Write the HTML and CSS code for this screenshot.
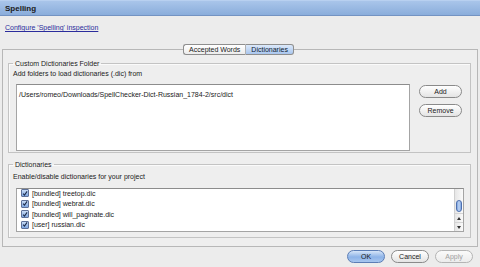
FILE: index.html
```html
<!DOCTYPE html>
<html lang="en">
<head>
    <meta charset="UTF-8">
    <meta name="viewport" content="width=device-width, initial-scale=1.0">
    <title>Spelling</title>
    <link rel="stylesheet" href="styles.css">
</head>
<body>
    <div class="titlebar">Spelling</div>
    <div class="link-row">
        <a href="#" class="config-link">Configure 'Spelling' inspection</a>
    </div>
    <div class="tabs">
        <div class="tab">Accepted Words</div>
        <div class="tab selected">Dictionaries</div>
    </div>
    <div class="pane">
        <fieldset class="group">
            <legend>Custom Dictionaries Folder</legend>
            <div class="hint">Add folders to load dictionaries (.dic) from</div>
            <div class="folder-row">
                <div class="folder-list">/Users/romeo/Downloads/SpellChecker-Dict-Russian_1784-2/src/dict</div>
                <div class="side-buttons">
                    <button class="btn">Add</button>
                    <button class="btn">Remove</button>
                </div>
            </div>
        </fieldset>
        <fieldset class="group dicts">
            <legend>Dictionaries</legend>
            <div class="hint">Enable/disable dictionaries for your project</div>
            <div class="dict-list">
                <div class="dict-items">
                    <div class="dict-item"><span class="check"><svg viewBox="0 0 8 8" width="8" height="8"><path d="M1.5 4.2 L3.3 6.2 L6.8 1.2" fill="none" stroke="#1c2a4a" stroke-width="1.4"/></svg></span>[bundled] treetop.dic</div>
                    <div class="dict-item"><span class="check"><svg viewBox="0 0 8 8" width="8" height="8"><path d="M1.5 4.2 L3.3 6.2 L6.8 1.2" fill="none" stroke="#1c2a4a" stroke-width="1.4"/></svg></span>[bundled] webrat.dic</div>
                    <div class="dict-item"><span class="check"><svg viewBox="0 0 8 8" width="8" height="8"><path d="M1.5 4.2 L3.3 6.2 L6.8 1.2" fill="none" stroke="#1c2a4a" stroke-width="1.4"/></svg></span>[bundled] will_paginate.dic</div>
                    <div class="dict-item"><span class="check"><svg viewBox="0 0 8 8" width="8" height="8"><path d="M1.5 4.2 L3.3 6.2 L6.8 1.2" fill="none" stroke="#1c2a4a" stroke-width="1.4"/></svg></span>[user] russian.dic</div>
                </div>
                <div class="scrollbar">
                    <div class="track"><div class="thumb"></div></div>
                    <div class="arrow up"></div>
                    <div class="arrow down"></div>
                </div>
            </div>
        </fieldset>
    </div>
    <div class="footer">
        <button class="btn default">OK</button>
        <button class="btn">Cancel</button>
        <button class="btn" disabled>Apply</button>
    </div>
</body>
</html>
```

FILE: styles.css
```css
body {
    margin: 0;
    width: 480px;
    height: 267px;
    overflow: hidden;
    background-color: #ececec;
    font-family: "Liberation Sans", Arial, sans-serif;
    font-size: 7px;
    color: #1a1a1a;
}
.titlebar {
    height: 16px;
    line-height: 16px;
    padding-left: 5px;
    font-size: 8px;
    font-weight: bold;
    background: linear-gradient(#a9c5ea, #8aaddb);
    border-top: 1px solid #b8d0f0;
    border-bottom: 1px solid #7393c2;
    box-sizing: border-box;
}
.link-row {
    padding: 7px 5px 0;
    height: 11px;
    line-height: 9px;
}
.config-link {
    color: #2b2c9c;
    text-decoration: underline;
}
.tabs {
    display: flex;
    justify-content: center;
    margin-top: 10px;
    margin-bottom: -6px;
    position: relative;
    z-index: 1;
    padding-right: 3px;
}
.tab {
    height: 9px;
    line-height: 9px;
    padding: 0 5px;
    border: 1px solid #8e8e8e;
    background: linear-gradient(#ffffff, #ececec);
}
.tab:first-child {
    border-radius: 3px 0 0 3px;
    border-right: 1px solid #b0b0b0;
}
.tab:last-child {
    border-radius: 0 3px 3px 0;
    border-left: none;
}
.tab.selected {
    background: linear-gradient(#dce9fa, #a9c6ee);
    color: #0d1a33;
}
.pane {
    margin: 0 2px 0 2px;
    height: 198px;
    border: 1px solid #b7b7b7;
    padding: 9px 6px 0 5px;
    box-sizing: border-box;
    background-color: #eeeeee;
}
.group {
    margin: 0;
    padding: 0 4px 1px 4px;
    border: 1px solid #c3c3c3;
    box-shadow: inset 1px 1px 0 #fafafa;
}
.group legend {
    padding: 0 2px;
    margin-left: 0;
    line-height: 9px;
}
.hint {
    line-height: 9px;
    margin-top: 1px;
}
.folder-row {
    display: flex;
    margin-top: 6px;
    margin-left: 3px;
}
.folder-list {
    width: 394px;
    height: 67px;
    box-sizing: border-box;
    border: 1px solid #a4a4a4;
    border-top-color: #8c8c8c;
    background-color: #fff;
    padding: 5px 2px;
    line-height: 9px;
}
.side-buttons {
    display: flex;
    flex-direction: column;
    gap: 6px;
    margin-left: 9px;
    padding-top: 1px;
}
.btn {
    font-family: "Liberation Sans", Arial, sans-serif;
    font-size: 7px;
    color: #1a1a1a;
    width: 43px;
    height: 13px;
    padding: 0;
    border: 1px solid #8a8a8a;
    border-radius: 7px;
    background: linear-gradient(#ffffff, #e4e4e4);
}
.btn:disabled {
    color: #a0a0a0;
    border-color: #b4b4b4;
    background: linear-gradient(#fafafa, #ececec);
}
.btn.default {
    border-color: #5b7db5;
    background: linear-gradient(#d6e5f8, #8db3e8 55%, #a7c6ef);
}
.dicts {
    margin-top: 7px;
    padding-bottom: 5px;
}
.dicts .hint {
    margin-top: 3px;
}
.dict-list {
    display: flex;
    margin-top: 7px;
    margin-left: 3px;
    margin-right: 2px;
    height: 44px;
    box-sizing: border-box;
    border: 1px solid #a4a4a4;
    border-top-color: #8c8c8c;
    background-color: #fff;
    overflow: hidden;
}
.dict-items {
    flex: 1;
    margin-top: -1px;
    padding-left: 4px;
}
.dict-item {
    display: flex;
    align-items: center;
    height: 10.5px;
}
.check {
    width: 8px;
    height: 8px;
    box-sizing: border-box;
    border: 1px solid #5e7199;
    border-radius: 1px;
    background: linear-gradient(#c9dcf5, #7ea6e0);
    margin-right: 3px;
    display: flex;
    align-items: center;
    justify-content: center;
}
.check svg {
    width: 7px;
    height: 7px;
}
.scrollbar {
    width: 8px;
    display: flex;
    flex-direction: column;
    border-left: 1px solid #d0d0d0;
    background: linear-gradient(90deg, #e6e6e6, #fafafa);
}
.track {
    flex: 1;
}
.thumb {
    margin: 11px 1px 0;
    height: 12px;
    border-radius: 3px;
    border: 1px solid #4d6fae;
    background: linear-gradient(90deg, #7ca3e0, #c2d6f3, #7ca3e0);
    box-sizing: border-box;
}
.arrow {
    height: 8px;
    display: flex;
    align-items: center;
    justify-content: center;
    border-top: 1px solid #d4d4d4;
}
.arrow.up::after {
    content: "";
    border-left: 2px solid transparent;
    border-right: 2px solid transparent;
    border-bottom: 3px solid #333;
}
.arrow.down::after {
    content: "";
    border-left: 2px solid transparent;
    border-right: 2px solid transparent;
    border-top: 3px solid #333;
}
.footer {
    display: flex;
    justify-content: flex-end;
    gap: 6px;
    padding: 3px 7px 0 0;
}
.footer .btn {
    width: 38px;
}
```
